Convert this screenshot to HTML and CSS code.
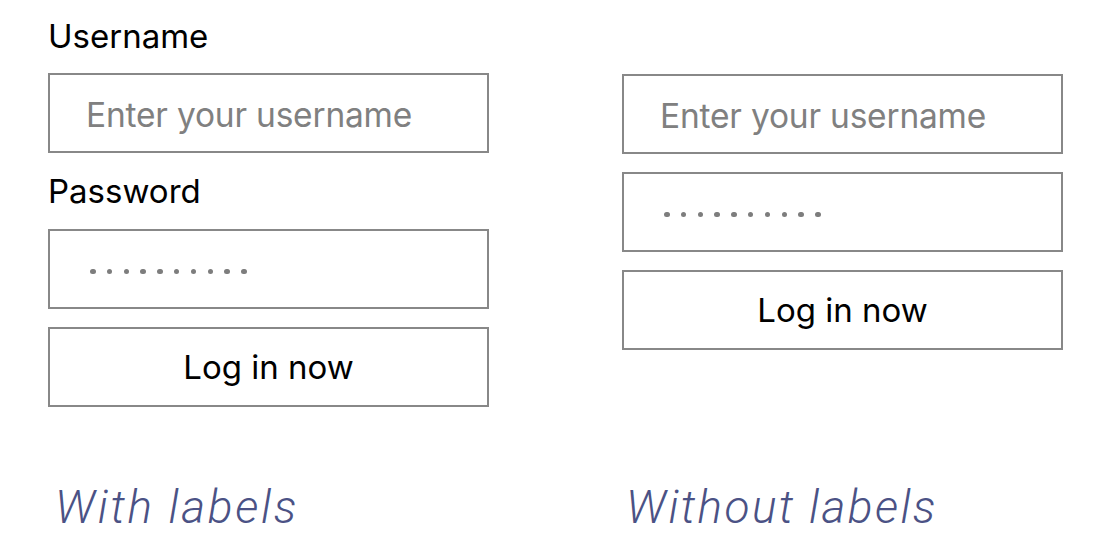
FILE: index.html
```html
<!DOCTYPE html>
<html>
<head>
<meta charset="utf-8">
<link rel="stylesheet" href="styles.css">
</head>
<body>
<div class="page">
  <section class="col col-left">
    <div class="form">
      <label class="label">Username</label>
      <div class="field"><span class="placeholder">Enter your username</span></div>
      <label class="label label-pw">Password</label>
      <div class="field field-pw"><span class="dots"><i></i><i></i><i></i><i></i><i></i><i></i><i></i><i></i><i></i><i></i></span></div>
      <div class="field button">Log in now</div>
    </div>
    <div class="caption">With labels</div>
  </section>
  <section class="col col-right">
    <div class="form form-nolabel">
      <div class="field"><span class="placeholder">Enter your username</span></div>
      <div class="field field-pw"><span class="dots"><i></i><i></i><i></i><i></i><i></i><i></i><i></i><i></i><i></i><i></i></span></div>
      <div class="field button">Log in now</div>
    </div>
    <div class="caption caption-right">Without labels</div>
  </section>
</div>
</body>
</html>
```
FILE: styles.css
```css
html, body {
  margin: 0;
  padding: 0;
  background: #ffffff;
}
body {
  width: 1100px;
  height: 550px;
  overflow: hidden;
  font-family: Inter, "Liberation Sans", sans-serif;
}
.page {
  display: flex;
  gap: 133px;
  padding-left: 48px;
}
.col {
  width: 441px;
  display: flex;
  flex-direction: column;
}
.form {
  box-sizing: border-box;
  height: 480px;
  display: flex;
  flex-direction: column;
}
.form-nolabel {
  padding-top: 74px;
  gap: 18px;
}
.label {
  display: block;
  font-size: 33px;
  line-height: 40px;
  color: #000;
  height: 40px;
}
.col-left .form {
  padding-top: 16px;
}
.col-left .label {
  margin-bottom: 17px;
}
.col-left .label-pw {
  margin-top: 18px;
  margin-bottom: 18px;
}
.col-left .button {
  margin-top: 18px;
}
.field {
  box-sizing: border-box;
  height: 80px;
  flex: none;
  border: 2px solid #888888;
  display: flex;
  align-items: center;
  padding-left: 36px;
}
.placeholder {
  font-size: 33.5px;
  color: #808080;
  letter-spacing: -0.2px;
  padding-top: 3px;
}
.dots {
  display: flex;
  gap: 11.3px;
  padding-left: 4px;
  margin-top: 5px;
}
.dots i {
  display: block;
  width: 5.5px;
  height: 5.5px;
  border-radius: 50%;
  background: #7d7d7d;
}
.button {
  justify-content: center;
  padding-left: 0;
  font-size: 33px;
  color: #000;
}
.caption {
  font-family: Roboto, "Liberation Sans", sans-serif;
  font-weight: 300;
  font-style: italic;
  font-size: 46px;
  color: #4b5285;
  letter-spacing: 2.7px;
  padding-left: 7px;
  white-space: nowrap;
}
.caption-right {
  letter-spacing: 2.4px;
  padding-left: 4px;
}
```
